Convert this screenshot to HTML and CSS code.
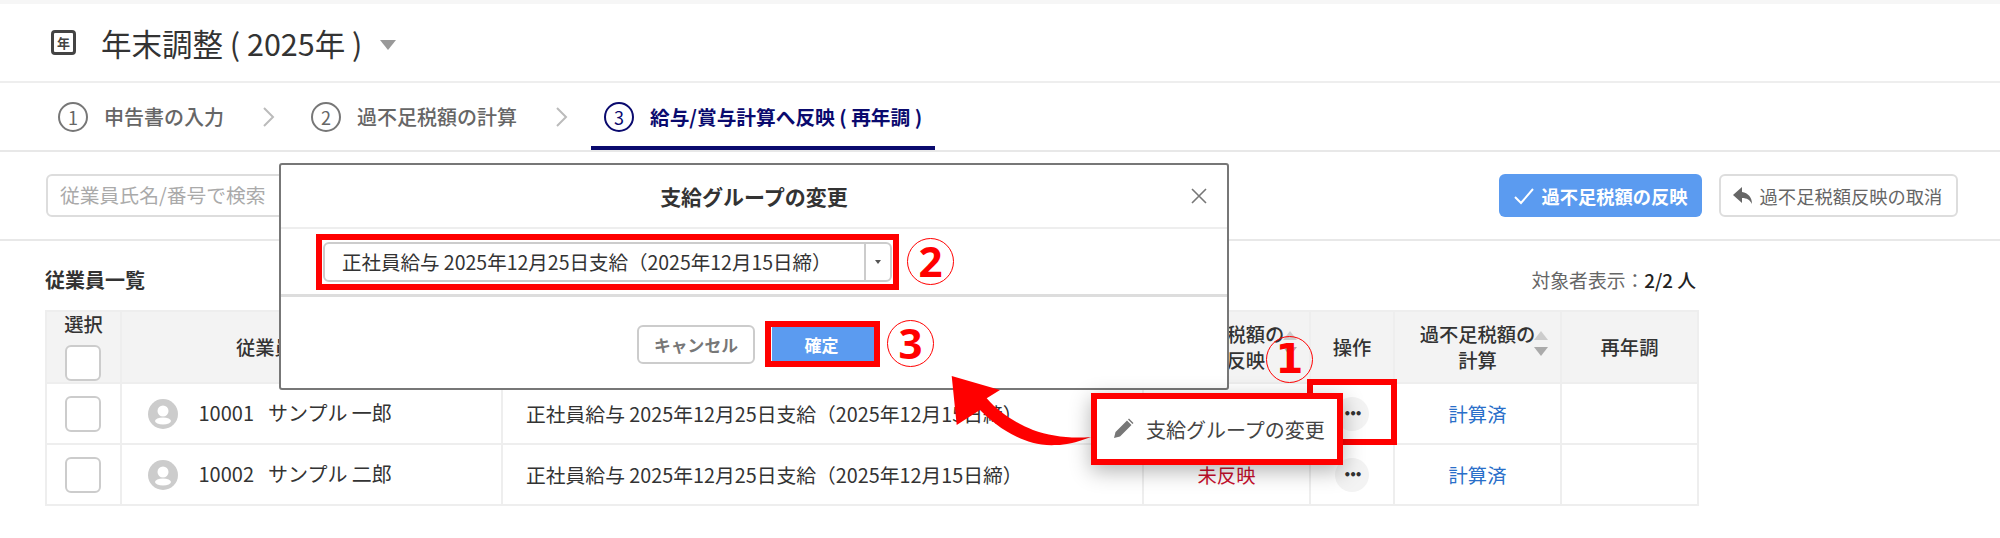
FILE: index.html
```html
<!DOCTYPE html>
<html lang="ja">
<head>
  <meta charset="UTF-8">
  <title>年末調整</title>
  <link rel="stylesheet" href="styles.css">
</head>
<body>
  <div class="page">
    <header class="title-bar">
      <span class="title-icon">年</span>
      <h1 class="title">年末調整 ( 2025年 )</h1>
      <span class="title-caret"></span>
    </header>

    <nav class="steps">
      <div class="step"><span class="step-num">1</span>申告書の入力</div>
      <svg class="step-sep" width="14" height="20" viewBox="0 0 14 20"><path d="M2 1l9 9-9 9" fill="none" stroke="#bbb" stroke-width="2"/></svg>
      <div class="step"><span class="step-num">2</span>過不足税額の計算</div>
      <svg class="step-sep" width="14" height="20" viewBox="0 0 14 20"><path d="M2 1l9 9-9 9" fill="none" stroke="#bbb" stroke-width="2"/></svg>
      <div class="step step-active"><span class="step-num">3</span>給与/賞与計算へ反映 ( 再年調 )</div>
    </nav>

    <div class="toolbar">
      <div class="search">従業員氏名/番号で検索</div>
      <div class="toolbar-actions">
        <button class="btn btn-primary">
          <svg width="22" height="18" viewBox="0 0 22 18"><path d="M2 10l6 6L20 2" fill="none" stroke="#fff" stroke-width="2"/></svg>
          過不足税額の反映
        </button>
        <button class="btn btn-plain">
          <svg width="22" height="20" viewBox="0 0 22 20"><path d="M10 1L1 9l9 8v-5c5 0 8 2 10 6 0-7-4-11-10-12z" fill="#666"/></svg>
          過不足税額反映の取消
        </button>
      </div>
    </div>

    <section class="list">
      <div class="list-head">
        <h2 class="list-title">従業員一覧</h2>
        <div class="list-count">対象者表示：<b>2/2 人</b></div>
      </div>
      <table class="emp-table">
        <colgroup>
          <col class="col-check"><col class="col-name"><col class="col-group"><col class="col-reflect"><col class="col-op"><col class="col-calc"><col class="col-re">
        </colgroup>
        <thead>
          <tr>
            <th class="th-check">選択<span class="check"></span></th>
            <th>従業員番号 / 氏名</th>
            <th>支給グループ</th>
            <th><span class="sortable">過不足税額の<br>給与反映<span class="sort"></span></span></th>
            <th>操作</th>
            <th><span class="sortable">過不足税額の<br>計算<span class="sort"></span></span></th>
            <th>再年調</th>
          </tr>
        </thead>
        <tbody>
          <tr>
            <td class="td-check"><span class="check"></span></td>
            <td class="td-name">
              <svg class="avatar" width="30" height="30" viewBox="0 0 30 30"><circle cx="15" cy="15" r="15" fill="#ccc"/><circle cx="15" cy="12" r="5.500" fill="#fff"/><ellipse cx="15" cy="22" rx="8" ry="3.500" fill="#fff"/></svg>
              <span class="emp-no">10001</span>サンプル 一郎
            </td>
            <td class="td-group">正社員給与 2025年12月25日支給（2025年12月15日締）</td>
            <td class="td-center td-red">未反映</td>
            <td class="td-center"><span class="more">•••</span></td>
            <td class="td-center td-link">計算済</td>
            <td></td>
          </tr>
          <tr>
            <td class="td-check"><span class="check"></span></td>
            <td class="td-name">
              <svg class="avatar" width="30" height="30" viewBox="0 0 30 30"><circle cx="15" cy="15" r="15" fill="#ccc"/><circle cx="15" cy="12" r="5.500" fill="#fff"/><ellipse cx="15" cy="22" rx="8" ry="3.500" fill="#fff"/></svg>
              <span class="emp-no">10002</span>サンプル 二郎
            </td>
            <td class="td-group">正社員給与 2025年12月25日支給（2025年12月15日締）</td>
            <td class="td-center td-red">未反映</td>
            <td class="td-center"><span class="more">•••</span></td>
            <td class="td-center td-link">計算済</td>
            <td></td>
          </tr>
        </tbody>
      </table>
    </section>

    <!-- dialog -->
    <div class="modal">
      <div class="modal-head">
        <span class="modal-title">支給グループの変更</span>
        <svg class="modal-close" width="18" height="18" viewBox="0 0 18 18"><path d="M2 2l14 14M16 2L2 16" stroke="#777" stroke-width="1.6"/></svg>
      </div>
      <div class="modal-body">
        <div class="select">
          <span class="select-text">正社員給与 2025年12月25日支給（2025年12月15日締）</span>
          <span class="select-arrow"></span>
        </div>
      </div>
      <div class="modal-foot">
        <button class="btn-cancel">キャンセル</button>
        <button class="btn-ok">確定</button>
      </div>
    </div>

    <!-- annotations -->
    <div class="mark mark-select"></div>
    <div class="mark mark-ok"></div>
    <div class="mark mark-more"></div>
    <span class="num num-1">1</span>
    <span class="num num-2">2</span>
    <span class="num num-3">3</span>
    <svg class="arrow" width="160" height="90" viewBox="0 0 160 90">
      <path d="M1.700 4L50 18L36.700 26.300C50 42 70 53 83 58C100 64 120 67 141 65C125 71 115 73 106.700 73C90 74 78 70 66.700 64.700C52 58 40 48 30 38L6.700 53z" fill="#f00"/>
    </svg>
    <div class="popup">
      <svg width="22" height="22" viewBox="0 0 22 22"><path d="M2 20l1.500-6L15 2.500l4.500 4.500L8 18.500z M16 1.500l1-1 4.500 4.500-1 1z" fill="#777"/></svg>
      支給グループの変更
    </div>
  </div>
</body>
</html>
```

FILE: styles.css
```css
* {
  box-sizing: border-box;
}

body {
  margin: 0;
  background: #fff;
  color: #333;
  font-family: "Noto Sans CJK JP", "Noto Sans", sans-serif;
  font-size: 20px;
}

.page {
  position: relative;
  width: 2000px;
  height: 538px;
  overflow: hidden;
  border-top: 4px solid #f6f6f6;
}

/* title */
.title-bar {
  display: flex;
  align-items: center;
  height: 79px;
  padding-left: 51px;
  border-bottom: 2px solid #eee;
}

.title-icon {
  display: flex;
  justify-content: center;
  align-items: center;
  width: 25px;
  height: 25px;
  border: 3px solid #444;
  border-radius: 4px;
  font-size: 13px;
  font-weight: 700;
  line-height: 1;
  color: #444;
}

.title {
  margin: 0 0 0 25px;
  font-size: 30.500px;
  font-weight: 400;
}

.title-caret {
  margin: 4px 0 0 18px;
  border: 8px solid transparent;
  border-top: 10px solid #999;
  border-bottom: 0;
}

/* steps */
.steps {
  display: flex;
  align-items: center;
  height: 69px;
  padding-left: 58px;
  border-bottom: 2px solid #e8e8e8;
}

.step {
  display: flex;
  align-items: center;
  height: 100%;
  color: #666;
  font-size: 20px;
  font-weight: 500;
}

.step-num {
  display: flex;
  justify-content: center;
  align-items: center;
  width: 30px;
  height: 30px;
  margin-right: 16px;
  border: 2px solid #777;
  border-radius: 50%;
  font-size: 18px;
  font-weight: 400;
}

.step-sep {
  margin: 0 35px 0 38px;
}

.step-active {
  margin-left: -13px;
  padding: 0 13px;
  box-shadow: inset 0 -4px #0a0a6e;
  color: #0a0a6e;
  font-size: 19.700px;
  font-weight: 700;
}

.step-active .step-num {
  border-color: #0a0a6e;
}

/* toolbar */
.toolbar {
  display: flex;
  justify-content: space-between;
  align-items: center;
  height: 89px;
  padding: 0 42px 0 46px;
  border-bottom: 2px solid #e8e8e8;
}

.search {
  width: 420px;
  height: 43px;
  padding-left: 12px;
  border: 2px solid #ddd;
  border-radius: 6px;
  color: #aaa;
  font-size: 19.800px;
  line-height: 37px;
}

.toolbar-actions {
  display: flex;
  gap: 17px;
}

.btn {
  display: flex;
  justify-content: center;
  align-items: center;
  gap: 6px;
  height: 43px;
  padding: 0;
  border-radius: 6px;
  font-family: inherit;
  font-size: 18.300px;
}

.btn-primary {
  width: 203px;
  border: 0;
  background: #5b9bf0;
  color: #fff;
  font-weight: 700;
}

.btn-plain {
  width: 239px;
  padding-right: 3px;
  border: 2px solid #ddd;
  background: #fff;
  color: #666;
}

/* list */
.list {
  padding: 0 45px;
}

.list-head {
  display: flex;
  justify-content: space-between;
  align-items: center;
  width: 1651px;
  height: 69px;
  padding-top: 8px;
}

.list-title {
  margin: 0;
  font-size: 20px;
  font-weight: 700;
}

.list-count {
  color: #666;
  font-size: 18.800px;
}

.list-count b {
  color: #222;
  font-weight: 500;
}

.emp-table {
  width: 1652px;
  table-layout: fixed;
  border-collapse: collapse;
}

.col-check { width: 75px; }
.col-name { width: 381px; }
.col-group { width: 641px; }
.col-reflect { width: 167px; }
.col-op { width: 84px; }
.col-calc { width: 167px; }
.col-re { width: 137px; }

.emp-table th,
.emp-table td {
  border: 2px solid #eee;
  padding: 0;
}

.emp-table th {
  height: 72px;
  background: #f3f3f3;
  font-size: 19.300px;
  font-weight: 500;
  line-height: 26px;
}

.emp-table td {
  height: 61px;
  font-size: 19.300px;
}

.check {
  display: block;
  width: 36px;
  height: 36px;
  margin: 0 auto;
  border: 2px solid #ccc;
  border-radius: 6px;
  background: #fff;
  transform: translateX(-1px);
}

.emp-table .th-check {
  vertical-align: top;
  line-height: 24px;
}

.th-check .check {
  margin-top: 9px;
}

.emp-table .td-name {
  padding-left: 26px;
  font-size: 20px;
}

.avatar {
  margin-right: 16px;
  vertical-align: -8px;
}

.emp-no {
  margin-right: 14px;
}

.emp-table .td-group {
  padding-left: 23px;
  font-size: 19.800px;
}

.td-center {
  text-align: center;
}

.td-red {
  color: #c8102e;
}

.td-link {
  color: #2a6fc9;
}

.more {
  display: inline-block;
  width: 34px;
  height: 34px;
  border-radius: 50%;
  background: #f3f3f3;
  font-family: "DejaVu Sans", sans-serif;
  font-size: 12px;
  font-weight: 700;
  line-height: 34px;
  letter-spacing: -2px;
}

.sortable {
  position: relative;
  display: inline-block;
}

.sort {
  position: absolute;
  top: 10px;
  right: -13px;
  border: 7px solid transparent;
  border-bottom: 9px solid #ccc;
  border-top: 0;
}

.sort::after {
  content: "";
  position: absolute;
  top: 16px;
  left: -7px;
  border: 7px solid transparent;
  border-top: 9px solid #aaa;
  border-bottom: 0;
}

/* modal */
.modal {
  position: absolute;
  top: 159px;
  left: 279px;
  width: 950px;
  height: 227px;
  border: 2px solid #777;
  border-radius: 3px;
  background: #fff;
}

.modal-head {
  position: relative;
  height: 64px;
  border-bottom: 2px solid #eee;
  font-size: 21px;
  font-weight: 700;
  line-height: 62px;
  text-align: center;
}

.modal-close {
  position: absolute;
  top: 22px;
  right: 19px;
}

.modal-body {
  height: 68px;
  padding: 13px 0 0 42px;
  border-bottom: 3px solid #ddd;
}

.select {
  display: flex;
  width: 569px;
  height: 40px;
  border: 2px solid #ccc;
  border-radius: 6px;
}

.select-text {
  flex: 1;
  padding-left: 17px;
  font-size: 19.500px;
  line-height: 36px;
  white-space: nowrap;
}

.select-arrow {
  position: relative;
  width: 26px;
  border-left: 2px solid #ccc;
}

.select-arrow::after {
  content: "";
  position: absolute;
  top: 16px;
  left: 9px;
  border: 3px solid transparent;
  border-top: 4px solid #555;
  border-bottom: 0;
}

.modal-foot {
  display: flex;
  justify-content: flex-end;
  gap: 17px;
  padding: 28px 352px 0 0;
}

.btn-cancel {
  width: 118px;
  height: 39px;
  border: 2px solid #ccc;
  border-radius: 6px;
  background: #fff;
  color: #777;
  font-family: inherit;
  font-size: 16.800px;
  font-weight: 700;
}

.btn-ok {
  width: 103px;
  height: 34px;
  margin-top: 2px;
  padding: 0 4px 0 0;
  border: 0;
  background: #5b9bf0;
  color: #fff;
  font-family: inherit;
  font-size: 17px;
  font-weight: 700;
}

/* red annotations */
.mark {
  position: absolute;
  border: 6px solid #f00;
}

.mark-select {
  top: 230px;
  left: 316px;
  width: 583px;
  height: 56px;
}

.mark-ok {
  top: 317px;
  left: 765px;
  width: 115px;
  height: 46px;
}

.mark-more {
  top: 375px;
  left: 1307px;
  width: 90px;
  height: 66px;
}

.num {
  position: absolute;
  width: 47px;
  height: 47px;
  border: 1.500px solid #f00;
  border-radius: 50%;
  color: #f00;
  font-family: "Noto Sans", sans-serif;
  font-size: 42px;
  font-weight: 700;
  line-height: 44px;
  text-align: center;
}

.num-1 {
  top: 332px;
  left: 1266px;
  font-family: "DejaVu Sans", sans-serif;
  font-size: 40px;
}

.num-2 { top: 234px; left: 907px; }
.num-3 { top: 316px; left: 887px; }

.arrow {
  position: absolute;
  top: 368px;
  left: 950px;
}

.popup {
  position: absolute;
  top: 389px;
  left: 1091px;
  display: flex;
  align-items: center;
  gap: 12px;
  width: 252px;
  height: 72px;
  padding-left: 15px;
  border: 6px solid #f00;
  background: #fff;
  box-shadow: 0 6px 20px rgba(0, 0, 0, 0.3);
  color: #444;
  font-size: 20px;
}
```
